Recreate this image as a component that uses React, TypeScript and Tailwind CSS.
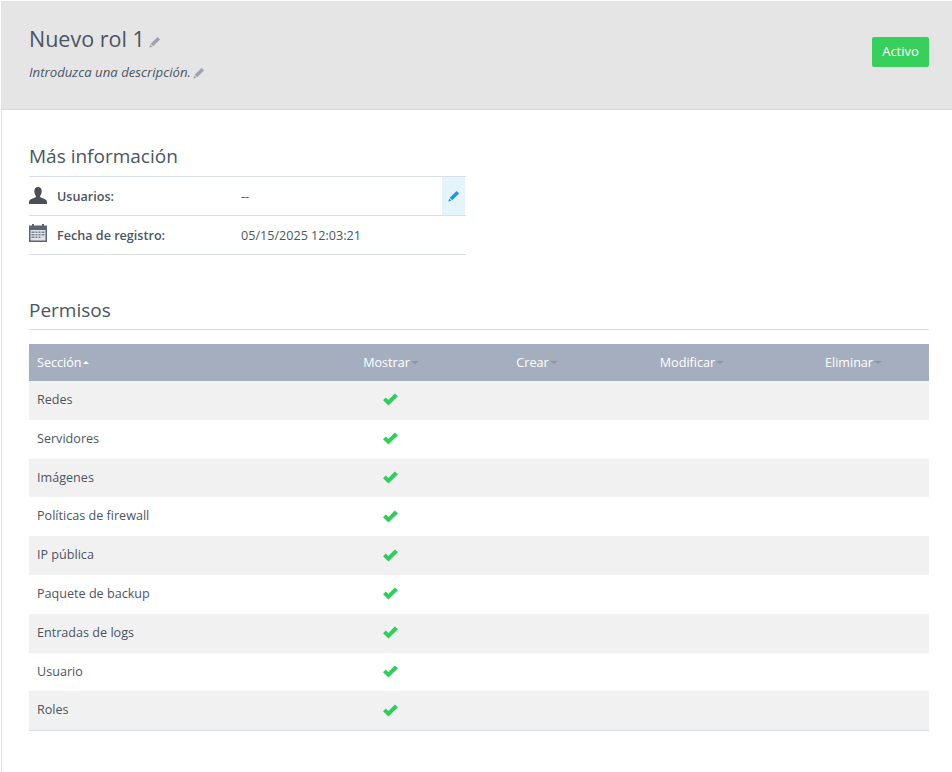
import React from "react";

const sections = [
  "Redes",
  "Servidores",
  "Imágenes",
  "Políticas de firewall",
  "IP pública",
  "Paquete de backup",
  "Entradas de logs",
  "Usuario",
  "Roles",
];

function Pencil({ className }: { className?: string }) {
  return (
    <svg viewBox="0 0 12 12" className={className} fill="currentColor">
      <path d="M8.6 0.9 11.1 3.4 4.2 10.3 1.7 7.8Z" />
      <path d="M1.2 8.6 3.4 10.8 0.4 11.6Z" />
    </svg>
  );
}

function Check() {
  return (
    <svg viewBox="0 0 16 13" className="w-[15px] h-[13px] text-[#30ce5c]" fill="currentColor">
      <path d="M0 7.2 3 4.4 5.7 7 12.6 0 16 3 5.8 13Z" />
    </svg>
  );
}

function SortDown() {
  return <span className="ml-px mb-px inline-block border-x-[4px] border-t-[3px] border-x-transparent border-t-[#8e96a6]" />;
}

function UserIcon() {
  return (
    <svg viewBox="0 0 19 18" className="w-[18px] h-[17px] text-[#4a4f57]" fill="currentColor">
      <path d="M9.5 0C12.3 0 13.6 2 13.4 4.8 13.3 6.6 12.7 8.2 11.9 9.2 11.5 9.8 11.6 10.6 12.4 11 14.6 12 18.6 12.6 19 15.2V18H0V15.2C0.4 12.6 4.4 12 6.6 11 7.4 10.6 7.5 9.8 7.1 9.2 6.3 8.2 5.7 6.6 5.6 4.8 5.4 2 6.7 0 9.5 0Z" />
    </svg>
  );
}

function CalendarIcon() {
  return (
    <svg viewBox="0 0 18 18" className="w-[18px] h-[18px]">
      <rect x="0" y="1.5" width="18" height="16.5" fill="#5b6472" />
      <rect x="1.5" y="6" width="15" height="10.5" fill="#dfe3e8" />
      <rect x="3" y="0" width="2" height="3.5" fill="#5b6472" />
      <rect x="13" y="0" width="2" height="3.5" fill="#5b6472" />
      <path
        d="M2.5 7.5h3v1.5h-3zM6.5 7.5h2v1.5h-2zM9.5 7.5h2v1.5h-2zM12.5 7.5h3v1.5h-3zM2.5 10h3v1.5h-3zM6.5 10h2v1.5h-2zM9.5 10h2v1.5h-2zM12.5 10h3v1.5h-3zM2.5 12.5h3v1.5h-3zM6.5 12.5h2v1.5h-2zM9.5 12.5h2v1.5h-2z"
        fill="#7a8391"
      />
    </svg>
  );
}

export default function App() {
  return (
    <div className="h-[772px] w-[952px] overflow-hidden bg-white pt-px pl-px font-['Open_Sans',sans-serif] text-[12.6px] text-[#4b5563]">
      <div className="h-full border-l border-t border-[#dde1e6]">
        {/* Cabecera */}
        <div className="h-[108px] bg-[#e5e5e5] border-b border-[#d9d9d9] pl-[27px] pr-[23px] flex justify-between">
          <div>
            <div className="mt-[21px] flex items-center h-[32px] text-[21.5px] text-[#4a5563]">
              Nuevo rol 1
              <Pencil className="ml-[4px] mt-[5px] w-[12px] h-[12px] text-[#9ca3af]" />
            </div>
            <div className="mt-[2px] flex items-center h-[32px] italic text-[13.2px]">
              Introduzca una descripción.
              <Pencil className="ml-[2px] w-[12px] h-[12px] text-[#9ca3af]" />
            </div>
          </div>
          <div className="mt-[35px] h-[30px] w-[57px] rounded-[2px] bg-[#37d05c] text-[13px] text-white flex items-center justify-center">
            Activo
          </div>
        </div>

        <div className="pl-[27px] pr-[23px]">
          {/* Más información */}
          <h2 className="mt-[33px] h-[33px] text-[19px] leading-[27px] text-[#4a5563]">Más información</h2>
          <div className="w-[437px] border-t border-[#d9dee5]">
            <div className="h-[39px] pr-px border-b border-[#d9dee5] flex items-center">
              <div className="w-[28px] -mt-[2px]">
                <UserIcon />
              </div>
              <div className="w-[184px] mt-[3px] font-semibold">Usuarios:</div>
              <div className="flex-1 mt-[3px]">--</div>
              <div className="w-[23px] h-full bg-[#e5f3fa] flex items-center justify-center">
                <Pencil className="w-[12px] h-[12px] text-[#1a9ad6]" />
              </div>
            </div>
            <div className="h-[39px] border-b border-[#d9dee5] flex items-center">
              <div className="w-[28px] -mt-[4px]">
                <CalendarIcon />
              </div>
              <div className="w-[184px] mt-[3px] font-semibold">Fecha de registro:</div>
              <div className="flex-1 mt-[3px]">05/15/2025 12:03:21</div>
            </div>
          </div>

          {/* Permisos */}
          <h2 className="mt-[42px] h-[32px] text-[19px] leading-[27px] text-[#4a5563] border-b border-[#dcdcdc] box-content">Permisos</h2>
          <div className="mt-[14px] border-b border-[#d9dee5]">
            <div className="grid grid-cols-[285px_154px_138px_172px_151px] h-[37px] bg-[#a5aebf] text-white items-center">
              <div className="pl-2 mt-[2px] flex items-center">
                Sección
                <span className="ml-px mb-px inline-block border-x-[3px] border-b-[3px] border-x-transparent border-b-white" />
              </div>
              {["Mostrar", "Crear", "Modificar", "Eliminar"].map((h) => (
                <div key={h} className="flex items-center justify-center mt-[2px]">
                  {h}
                  <SortDown />
                </div>
              ))}
            </div>
            {sections.map((s, i) => (
              <div
                key={s}
                className={`grid grid-cols-[285px_154px_138px_172px_151px] h-[38.8px] items-center ${
                  i % 2 === 0 ? "bg-[#f1f1f1]" : "bg-white"
                }`}
              >
                <div className="pl-2">{s}</div>
                <div className="flex justify-center -mt-px mr-[2px]">
                  <Check />
                </div>
              </div>
            ))}
          </div>
        </div>
      </div>
    </div>
  );
}
